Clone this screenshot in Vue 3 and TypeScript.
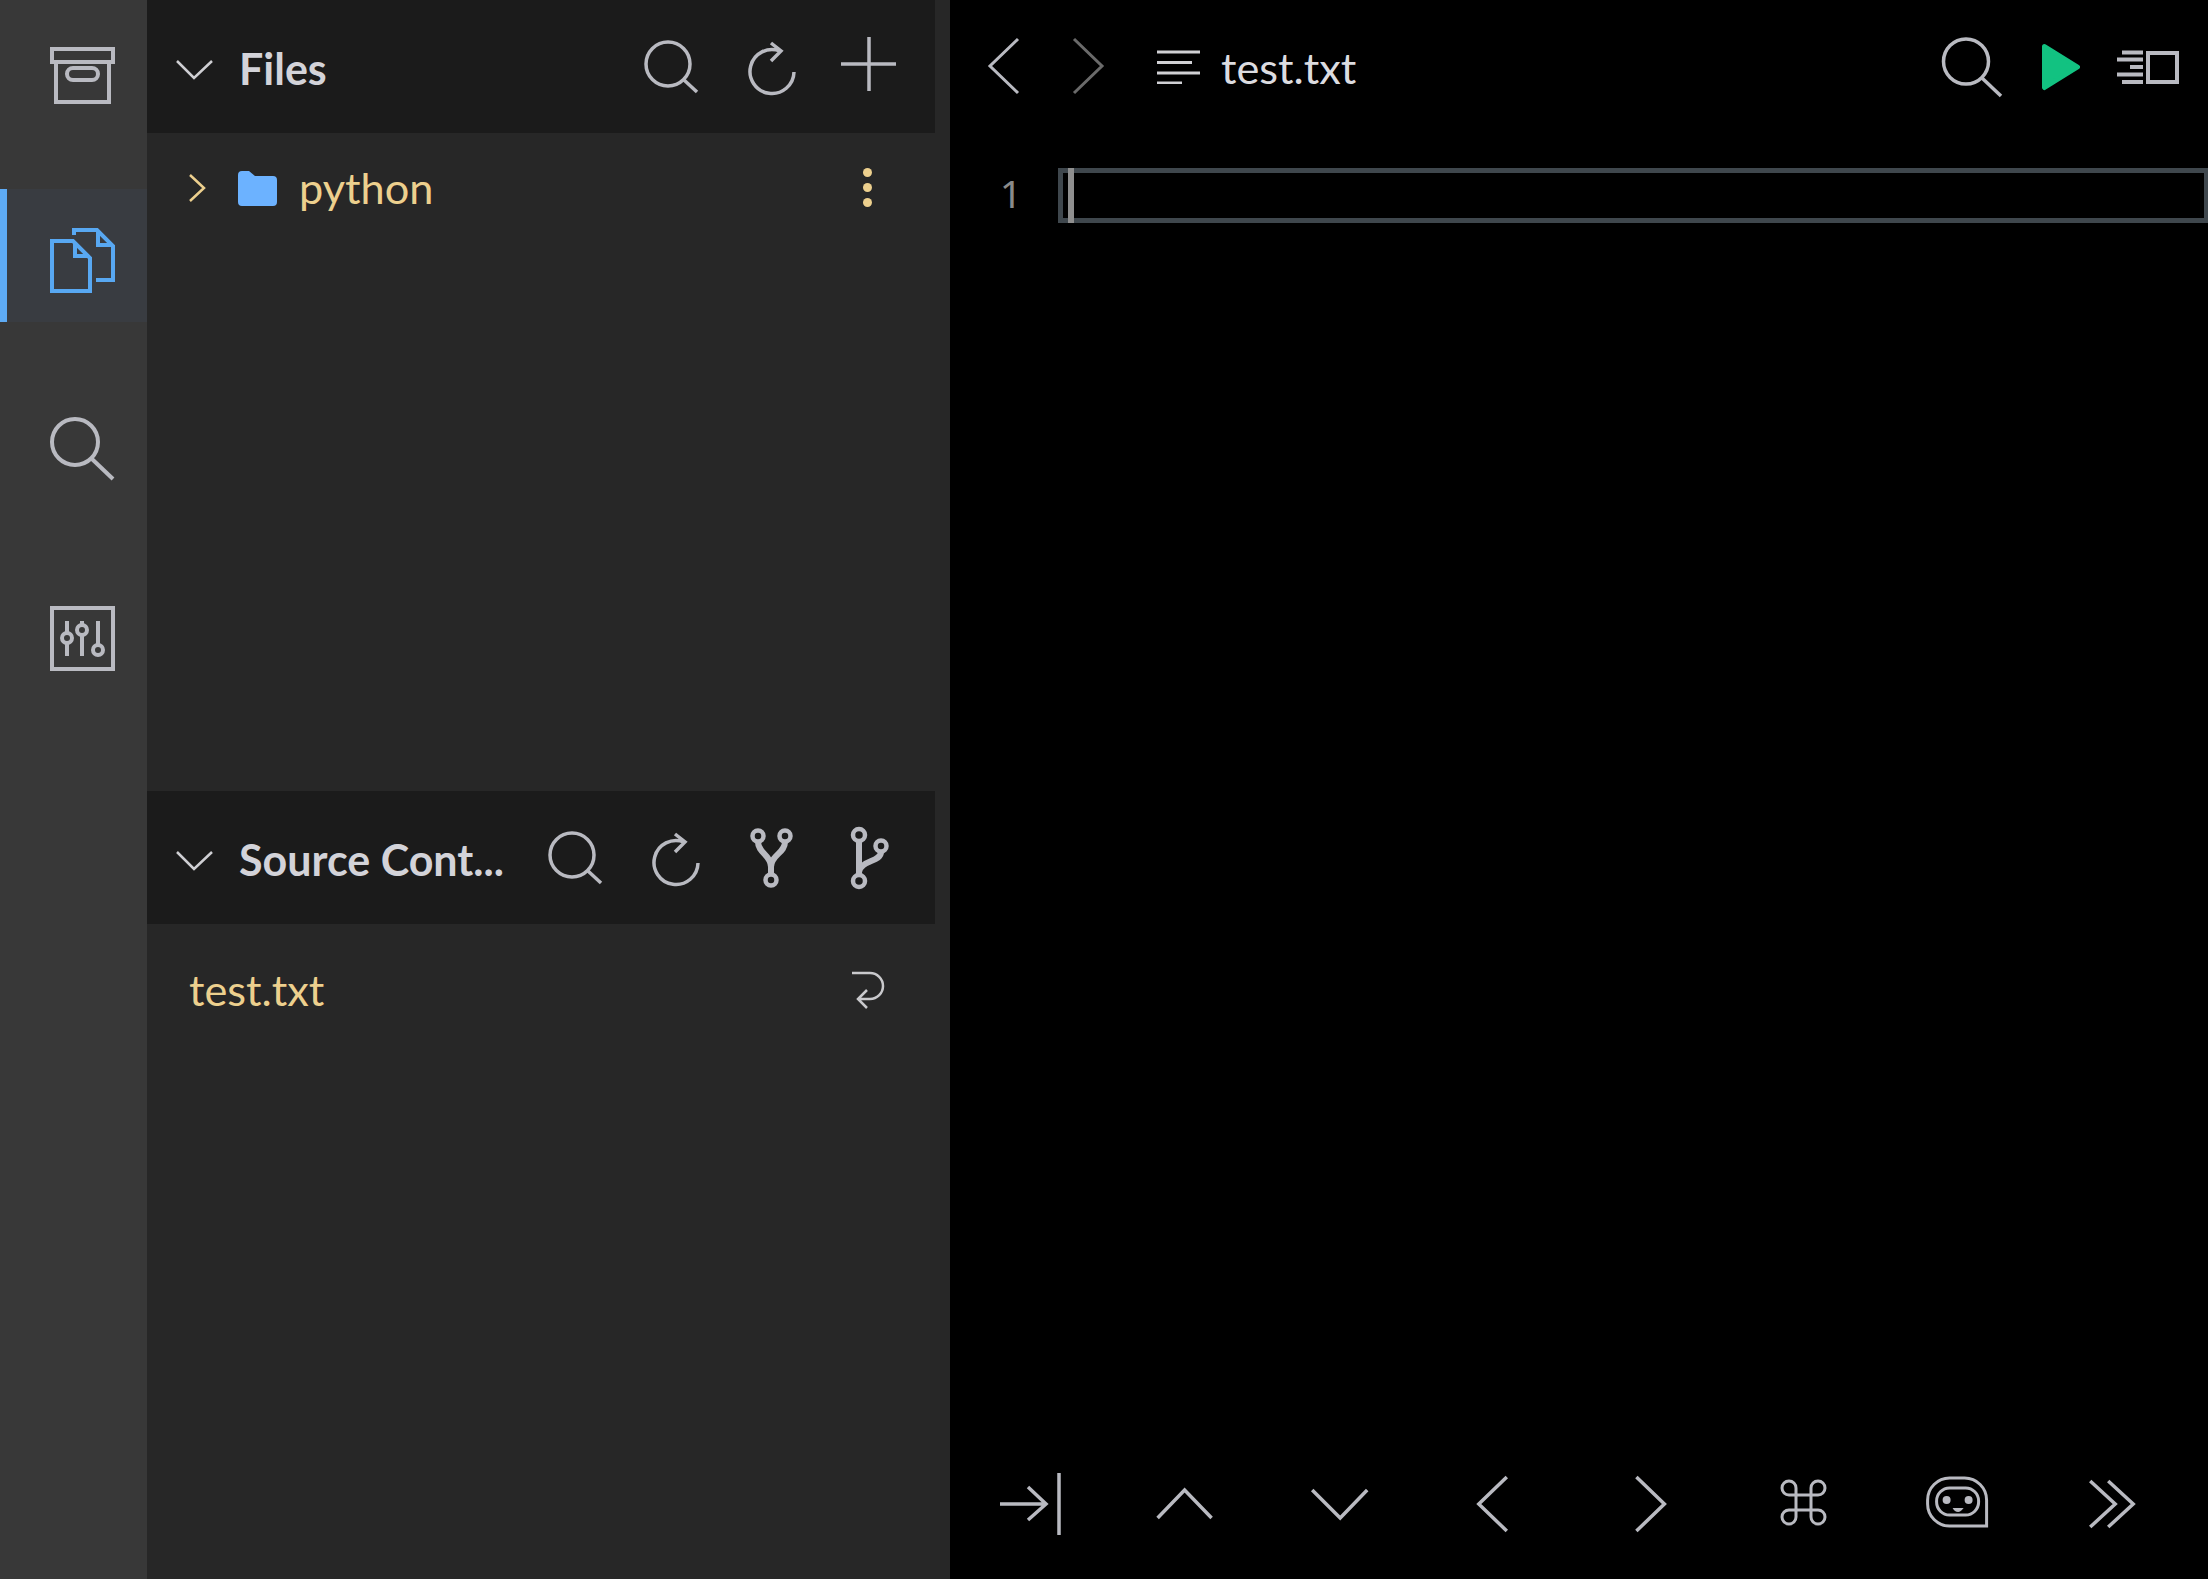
<script setup lang="ts">
interface Tool { name: string; d: string; dot?: boolean }
const raw: Tool[] = [
  { name: 'tab', d: 'M1000 1504H1046M1028 1487L1046 1504L1028 1520M1059 1473V1535' },
  { name: 'up', d: 'M1157 1518L1184 1490L1211 1518' },
  { name: 'down', d: 'M1312 1490L1340 1518L1367 1490' },
  { name: 'left', d: 'M1507 1477L1479 1504L1507 1531' },
  { name: 'right', d: 'M1636 1477L1664 1504L1636 1531' },
  {
    name: 'cmd',
    d: 'M1796 1517V1488A7 7 0 1 0 1789 1495H1818A7 7 0 1 0 1811 1488V1517A7 7 0 1 0 1818 1510H1789A7 7 0 1 0 1796 1517Z'
  },
  {
    name: 'bot',
    d: 'M1950 1478H1965A22 22 0 0 1 1987 1500V1526H1950A22 22 0 0 1 1928 1504V1500A22 22 0 0 1 1950 1478ZM1950 1488H1966A13 13 0 0 1 1979 1501V1502A13 13 0 0 1 1966 1515H1950A13 13 0 0 1 1937 1502V1501A13 13 0 0 1 1950 1488Z',
    dot: true
  },
  { name: 'more', d: 'M2090 1481L2115 1504L2090 1527M2108 1481L2133 1504L2108 1527' }
]
const tools = raw.map((t, i) => ({ ...t, vb: `${991 + 154.4 * i} 1464 80 80` }))
</script>

<template>
  <div class="app">
    <nav class="rail">
      <div class="rail-item rail-archive">
        <svg class="ic" width="69" height="61" viewBox="48 45 69 61">
          <rect x="52" y="49" width="61" height="13" />
          <path d="M56 62V102H109V62" />
          <rect x="67" y="68" width="31" height="12" rx="6" />
        </svg>
      </div>
      <div class="rail-item rail-files">
        <svg class="ic blue" width="69" height="69" viewBox="48 226 69 69">
          <path d="M52 241H73L90 258V291H52Z" />
          <path d="M75 243V256H89" />
          <path d="M74 235V230H97L113 246V280H96" />
          <path d="M98 232V245H112" />
        </svg>
      </div>
      <div class="rail-item rail-search">
        <svg class="ic" width="67" height="67" viewBox="48 415 67 67">
          <circle cx="75" cy="442" r="23" />
          <path d="M92 459L113 479" />
        </svg>
      </div>
      <div class="rail-item rail-tune">
        <svg class="ic" width="69" height="69" viewBox="48 604 69 69">
          <rect x="52" y="608" width="61" height="61" />
          <path d="M67 621V633M67 643V656M82 621V625M82 635V656M98 621V645" />
          <circle cx="67" cy="638" r="5" />
          <circle cx="82" cy="630" r="5" />
          <circle cx="98" cy="650" r="5" />
        </svg>
      </div>
    </nav>

    <aside class="side">
      <header class="head">
        <svg class="chev head-chev" width="40" height="24" viewBox="174 58 40 24"><path d="M177 61L194 78L212 61" /></svg>
        <h2 class="title">Files</h2>
        <div class="actions files-actions">
          <svg class="ic thin" width="57" height="61" viewBox="643 36 57 61">
            <circle cx="668" cy="64" r="22" />
            <path d="M684 80L697 92" />
          </svg>
          <svg class="ic thin a-refresh" width="50" height="61" viewBox="747 36 50 61">
            <path d="M794 72A22 22 0 1 1 780 51M771 43L781 51L771 61" />
          </svg>
          <svg class="ic thin a-plus" width="59" height="61" viewBox="839 36 59 61">
            <path d="M869 37V91M841 64H896" />
          </svg>
        </div>
      </header>

      <div class="tree">
        <div class="row">
          <svg class="chev gold" width="20" height="32" viewBox="187 171 20 32"><path d="M190 174L204 187L190 200" /></svg>
          <svg class="folder" width="39" height="35" viewBox="238 171 39 35">
            <path d="M238 175A4 4 0 0 1 242 171H249L255 176H273A4 4 0 0 1 277 180V202A4 4 0 0 1 273 206H242A4 4 0 0 1 238 202Z" />
          </svg>
          <span class="name">python</span>
          <div class="dots"><i></i><i></i><i></i></div>
        </div>
      </div>

      <header class="head">
        <svg class="chev head-chev" width="40" height="24" viewBox="174 58 40 24"><path d="M177 61L194 78L212 61" /></svg>
        <h2 class="title">Source Cont...</h2>
        <div class="actions scm-actions">
          <svg class="ic thin" width="57" height="61" viewBox="643 36 57 61">
            <circle cx="668" cy="64" r="22" />
            <path d="M684 80L697 92" />
          </svg>
          <svg class="ic thin s-refresh" width="50" height="61" viewBox="747 36 50 61">
            <path d="M794 72A22 22 0 1 1 780 51M771 43L781 51L771 61" />
          </svg>
          <svg class="ic s-fork" width="44" height="62" viewBox="750 826 44 62">
            <circle cx="758" cy="835" r="5.5" />
            <circle cx="785" cy="835" r="5.5" />
            <circle cx="771" cy="879" r="5.5" />
            <path class="bold" d="M758 841C758 852 771 854 771 866V873M785 841C785 852 771 854 771 866" />
          </svg>
          <svg class="ic s-branch" width="43" height="64" viewBox="849 826 43 64">
            <circle cx="859" cy="835" r="6" />
            <circle cx="859" cy="881" r="6" />
            <circle cx="881" cy="846" r="5.5" />
            <path class="bold" d="M859 841V875M881 852C881 862 861 860 859 872" />
          </svg>
        </div>
      </header>

      <div class="changes">
        <div class="change">
          <span class="name">test.txt</span>
          <svg class="chev soft" width="38" height="42" viewBox="850 971 38 42">
            <path d="M852 974H870A13 13 0 0 1 870 1000H858M867 991L858 1000L867 1009" />
          </svg>
        </div>
      </div>
    </aside>

    <main class="editor">
      <header class="topbar">
        <svg class="ic nav" width="34" height="61" viewBox="986 36 34 61"><path d="M1017 39L989 66L1017 93" /></svg>
        <svg class="ic nav dim" width="34" height="61" viewBox="1072 36 34 61"><path d="M1075 39L1103 66L1075 93" /></svg>
        <svg class="ic outline" width="44" height="34" viewBox="1157 50 44 34">
          <path d="M1157 52H1200M1157 62.500H1192M1157 73H1200M1157 83H1182" />
        </svg>
        <span class="tab-name">test.txt</span>
        <div class="top-right">
          <svg class="ic thin" width="62" height="62" viewBox="1941 35 62 62">
            <circle cx="1966" cy="60.500" r="22.500" />
            <path d="M1982 77L2001 95" />
          </svg>
          <svg class="play" width="42" height="50" viewBox="2040 41 42 50">
            <path d="M2044.500 45.500L2077.500 66L2044.500 86.500Z" />
          </svg>
          <svg class="ic panel" width="64" height="36" viewBox="2116 50 64 36">
            <rect x="2148" y="54" width="29" height="29" />
            <path d="M2122 53.500H2143M2117 60.500H2143M2130 68H2143M2117 75.500H2143M2122 83H2143" />
          </svg>
        </div>
      </header>

      <section class="code">
        <div class="ln">1</div>
        <div class="active-line"><span class="cursor"></span></div>
      </section>

      <footer class="toolbar">
        <div v-for="t in tools" :key="t.name" class="tool">
          <svg class="ic" :class="t.name" width="80" height="80" :viewBox="t.vb">
            <path :d="t.d" />
            <template v-if="t.dot">
              <circle class="solid" cx="1947" cy="1500" r="4" />
              <circle class="solid" cx="1969" cy="1500" r="4" />
              <path class="solid" d="M1953 1508H1964Q1961 1512 1958.500 1512Q1955 1512 1953 1508Z" />
            </template>
          </svg>
        </div>
      </footer>
    </main>
  </div>
</template>

<style scoped>
.app {
  display: flex;
  width: 100%;
  height: 100vh;
  overflow: hidden;
  background: #000;
  font-family: Lato, "Liberation Sans", sans-serif;
}
svg {
  display: block;
  flex: none;
}
.ic {
  fill: none;
  stroke: #b9bac1;
  stroke-width: 4;
}
.ic.thin {
  stroke-width: 3.5;
}
.ic .solid {
  fill: #b9bac1;
  stroke: none;
}
.ic .bold {
  stroke-width: 6;
}
.ic.blue {
  stroke: #58a8f2;
  margin-top: 10px;
}
.rail {
  flex: none;
  width: 147px;
  background: #383838;
}
.rail-item {
  height: 133px;
  padding-left: 48px;
  display: flex;
  align-items: center;
}
.rail-archive {
  margin-top: 9px;
}
.rail-files {
  margin-top: 47px;
  padding-left: 41px;
  border-left: 7px solid #5eabf5;
  background: #393c41;
}
.rail-search {
  margin-top: 60px;
}
.rail-tune {
  margin-top: 57px;
}
.side {
  flex: none;
  width: 803px;
  display: flex;
  flex-direction: column;
  background: #272727;
}
.head {
  flex: none;
  width: 788px;
  height: 133px;
  display: flex;
  align-items: center;
  padding-left: 27px;
  box-sizing: border-box;
  background: #1b1b1b;
}
.head-chev {
  margin-top: 7px;
}
.title {
  margin: 4px 0 0 25px;
  font-size: 43px;
  line-height: 50px;
  font-weight: 700;
  color: #d3d3d9;
}
.actions {
  margin-left: auto;
  display: flex;
  align-items: center;
}
.files-actions {
  padding-right: 37px;
}
.a-refresh {
  margin-left: 47px;
}
.a-plus {
  margin-left: 42px;
}
.scm-actions {
  padding-right: 43px;
}
.s-refresh {
  margin-left: 47px;
}
.s-fork {
  margin-left: 49.500px;
  stroke-width: 4.5;
}
.s-branch {
  margin-left: 55px;
  stroke-width: 4.5;
}
.chev {
  fill: none;
  stroke: #cfcfd3;
  stroke-width: 2.500;
}
.chev.gold {
  stroke: #edd08e;
}
.chev.soft {
  stroke: #c9c9cc;
}
.tree {
  flex: 1;
}
.row {
  height: 110px;
  display: flex;
  align-items: center;
  padding-left: 40px;
}
.folder {
  margin-left: 31px;
  fill: #6cb2ff;
}
.name {
  font-size: 43.3px;
  line-height: 50px;
  color: #edd08e;
}
.row .name {
  margin-left: 22px;
  margin-top: -2px;
}
.change .name {
  margin-top: -3px;
}
.dots {
  margin-left: auto;
  margin-right: 78px;
  margin-top: -2px;
  display: flex;
  flex-direction: column;
  gap: 6px;
}
.dots i {
  display: block;
  width: 9px;
  height: 9px;
  border-radius: 50%;
  background: #edd08e;
}
.changes {
  flex: 1;
  max-height: 655px;
}
.change {
  height: 133px;
  display: flex;
  align-items: center;
  justify-content: space-between;
  padding: 0 62px 0 42px;
}
.editor {
  flex: 1;
  min-width: 0;
  display: flex;
  flex-direction: column;
  background: #000;
}
.topbar {
  flex: none;
  height: 133px;
  display: flex;
  align-items: center;
  padding-left: 37px;
  padding-right: 28px;
}
.ic.nav {
  stroke-width: 3;
  margin-right: 50px;
}
.ic.nav.dim {
  stroke: #6a6a6a;
  margin-right: 52px;
}
.ic.outline {
  stroke: #d0d0d4;
  stroke-width: 3;
}
.tab-name {
  margin-left: 20px;
  font-size: 43.3px;
  line-height: 50px;
  color: #dcdce0;
}
.top-right {
  margin-left: auto;
  display: flex;
  align-items: center;
}
.play {
  margin-left: 37px;
  fill: #12c281;
  stroke: #12c281;
  stroke-width: 5;
  stroke-linejoin: round;
}
.panel {
  margin-left: 34px;
}
.code {
  flex: 1;
  display: flex;
  align-items: flex-start;
  padding-top: 35px;
}
.ln {
  flex: none;
  width: 108px;
  box-sizing: border-box;
  padding-right: 36px;
  text-align: right;
  height: 55px;
  line-height: 50px;
  font-family: "Noto Sans", sans-serif;
  font-size: 39px;
  color: #8a8a8a;
}
.active-line {
  position: relative;
  flex: 1;
  height: 55px;
  box-sizing: border-box;
  border: 5px solid #3f474d;
  border-right-width: 4px;
}
.cursor {
  position: absolute;
  left: 5px;
  top: -5px;
  bottom: -5px;
  width: 6px;
  background: #8f8f8f;
}
.toolbar {
  flex: none;
  height: 150px;
  box-sizing: border-box;
  padding: 0 19px 0 4px;
  display: grid;
  grid-template-columns: repeat(8, 1fr);
  align-items: center;
}
.tool {
  display: flex;
  justify-content: center;
}
.toolbar .ic {
  stroke-width: 3.5;
}
.toolbar .ic.cmd,
.toolbar .ic.bot {
  stroke-width: 3;
}
</style>
